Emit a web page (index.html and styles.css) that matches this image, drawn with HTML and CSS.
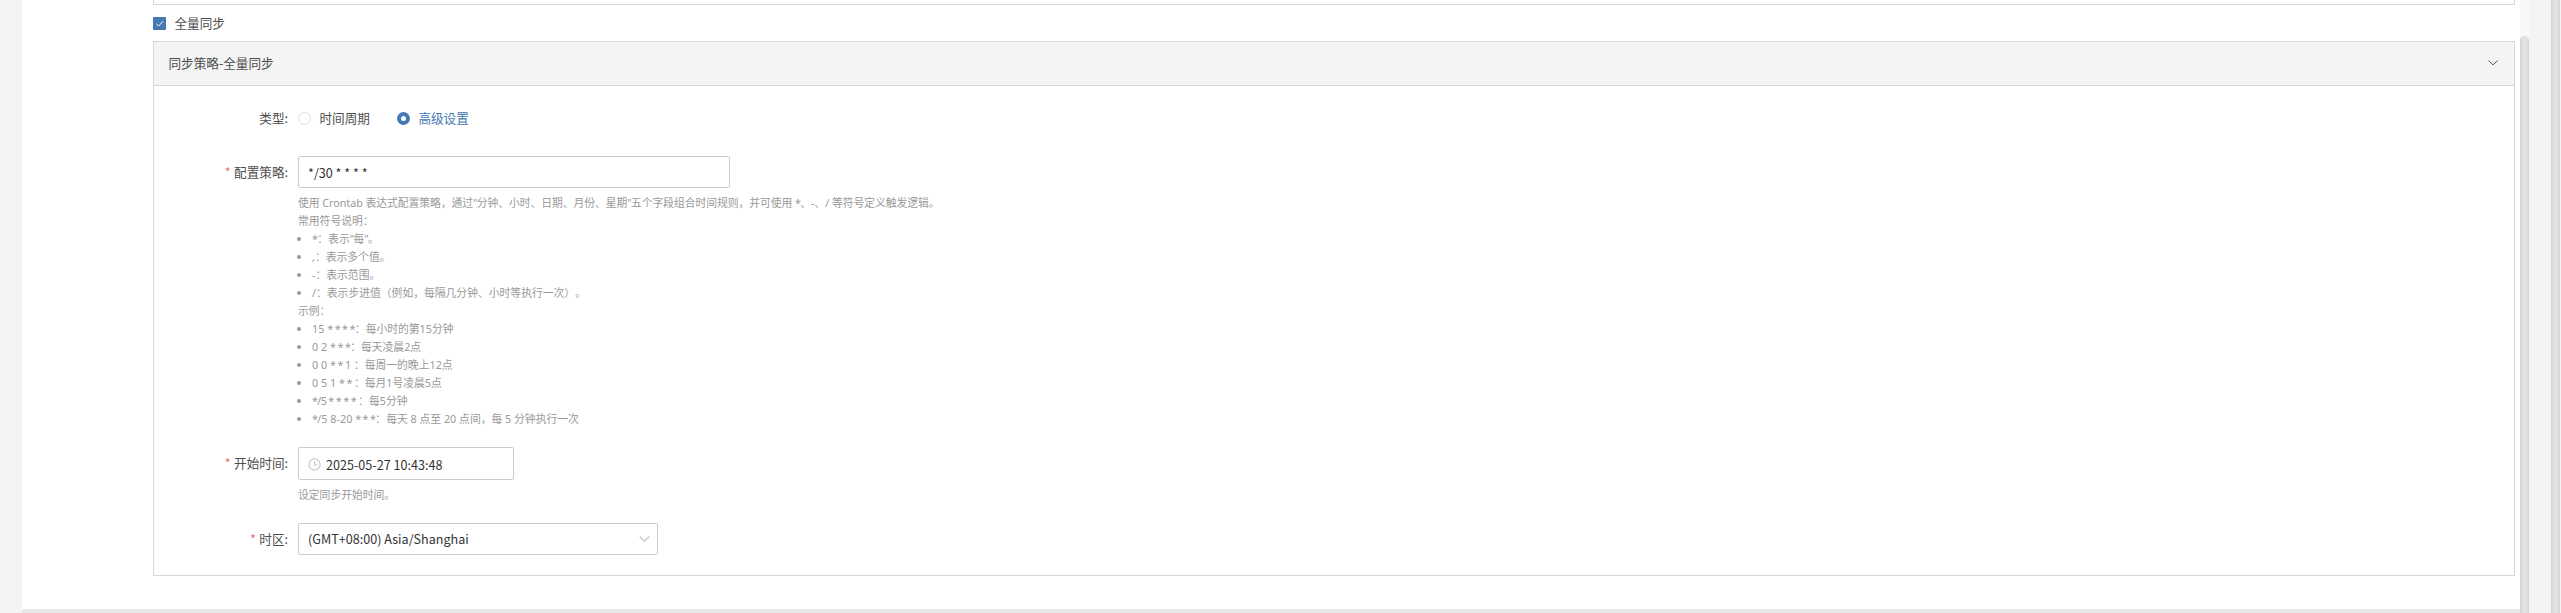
FILE: index.html
```html
<!DOCTYPE html>
<html lang="zh-CN">
<head>
<meta charset="utf-8">
<title>同步策略</title>
<link rel="stylesheet" href="styles.css">
</head>
<body>
<div class="page">
  <main class="content">
    <div class="previous"></div>
    <label class="check">
      <span class="check-box"><svg width="13" height="13" viewBox="0 0 13 13"><path d="M3.3 6.8 5.6 9 10 4.3" fill="none" stroke="#fff" stroke-width="1"/></svg></span>
      <span>全量同步</span>
    </label>
    <section class="card">
      <header class="card-head">
        <span>同步策略-全量同步</span>
        <svg width="10" height="6" viewBox="0 0 10 6"><path d="M.5.6 5 4.9 9.5.6" fill="none" stroke="#555" stroke-width="1"/></svg>
      </header>
      <div class="form">
        <div class="row row-type">
          <div class="label">类型<i>:</i></div>
          <div class="radios">
            <span class="radio"></span><span class="radio-text">时间周期</span>
            <span class="radio on"></span><span class="radio-text on-text">高级设置</span>
          </div>
        </div>
        <div class="row row-cron">
          <div class="label"><b>*</b>配置策略<i>:</i></div>
          <div class="field">
            <div class="input cron">*/30 * * * *</div>
            <div class="help">
              <p class="intro">使用 Crontab 表达式配置策略，通过<em>"</em>分钟、小时、日期、月份、星期<em>"</em>五个字段组合时间规则，并可使用 <em>*</em>、-、/ 等符号定义触发逻辑。</p>
              <p>常用符号说明：</p>
              <ul>
                <li><em>*</em>：表示<em>"</em>每<em>"</em>。</li>
                <li>,：表示多个值。</li>
                <li>-：表示范围。</li>
                <li>/：表示步进值（例如，每隔几分钟、小时等执行一次）。</li>
              </ul>
              <p>示例：</p>
              <ul>
                <li>15 <em>* * * *</em>：每小时的第15分钟</li>
                <li>0 2 <em>* * *</em>：每天凌晨2点</li>
                <li>0 0 <em>* * </em>1 ：每周一的晚上12点</li>
                <li>0 5 1 <em>* * </em>：每月1号凌晨5点</li>
                <li><em>*/5 * * * * </em>：每5分钟</li>
                <li><em>*</em>/5 8-20 <em>* * *</em>：每天 8 点至 20 点间，每 5 分钟执行一次</li>
              </ul>
            </div>
          </div>
        </div>
        <div class="row row-start">
          <div class="label"><b>*</b>开始时间<i>:</i></div>
          <div class="field">
            <div class="input date">
              <svg width="13" height="13" viewBox="0 0 13 13"><g fill="none" stroke="#c3c7d0" stroke-width="1.1"><circle cx="6.5" cy="6.5" r="5.6"/><path d="M6.5 3v4h3.2"/></g></svg>
              <span>2025-05-27 10:43:48</span>
            </div>
            <div class="help">设定同步开始时间。</div>
          </div>
        </div>
        <div class="row row-zone">
          <div class="label"><b>*</b>时区<i>:</i></div>
          <div class="input zone">
            <span>(GMT+08:00) Asia/Shanghai</span>
            <svg width="11" height="6" viewBox="0 0 11 6"><path d="M.7.5 5.5 5.2 10.3.5" fill="none" stroke="#c0c4cc" stroke-width="1.1"/></svg>
          </div>
        </div>
      </div>
    </section>
    <div class="bottom-track"></div>
  </main>
  <div class="inner-scroll"><div class="thumb"></div></div>
  <div class="gutter"></div>
  <div class="thumb outer"></div>
</div>
</body>
</html>
```
FILE: styles.css
```css
* { box-sizing: border-box; }
body, p, ul { margin: 0; padding: 0; }
body {
  font-family: "Noto Sans CJK SC", sans-serif;
  font-size: 12.6px;
  color: #4d4d4d;
  background: #f4f4f4;
  overflow: hidden;
}
svg { display: block; flex: none; }
.page { display: flex; height: 613px; padding-left: 22px; }
.content {
  width: 2498px;
  height: 613px;
  background: #fff;
  padding-left: 131px;
  display: flex;
  flex-direction: column;
}
.previous { width: 2362px; height: 5px; border: 1px solid #d8d8d8; border-top: 0; flex: none; }
.check { display: flex; align-items: center; gap: 8.5px; height: 18px; margin-top: 9px; line-height: 17px; padding-bottom: 1px; flex: none; }
.check-box { width: 13px; height: 13px; border-radius: 1px; background: #4479b3; margin-top: 2px; }
.card { width: 2362px; height: 535px; margin-top: 9px; border: 1px solid #d8d8d8; flex: none; }
.card-head {
  display: flex;
  align-items: center;
  justify-content: space-between;
  height: 44px;
  padding: 0 16px 3px 14.5px;
  background: #f4f4f4;
  border-bottom: 1px solid #d8d8d8;
}
.card-head svg { margin-top: 2px; }
.form { display: flex; flex-direction: column; padding-top: 16px; }
.row { display: flex; align-items: flex-start; }
.label {
  width: 144px;
  padding-right: 10px;
  text-align: right;
  line-height: 32px;
  flex: none;
}
.label b { font-weight: 400; color: #f56c6c; margin-right: 3.5px; font-size: 12.6px; }
.label i { font-style: normal; }
.row-type { height: 54px; }
.radios { display: flex; align-items: center; height: 32px; padding-top: 1px; }
.radio { width: 13px; height: 13px; border: 1px solid #dcdfe6; border-radius: 50%; background: #fff; }
.radio.on { margin-left: 27px; border: 4.5px solid #4479b3; }
.radio-text { margin-left: 8.5px; line-height: 18px; margin-top: -1px; }
.on-text { color: #4479b3; }
.row-cron { height: 291px; }
.input {
  display: flex;
  align-items: center;
  height: 32px;
  padding: 0 9px;
  border: 1px solid #ccc;
  border-radius: 2px;
  color: #333;
  background: #fff;
}
.cron { width: 432px; }
.help {
  margin-top: 6px;
  font-family: "Noto Sans", "Noto Sans CJK SC", sans-serif;
  font-size: 10.8px;
  line-height: 18px;
  color: #999;
  white-space: nowrap;
  text-spacing-trim: space-all;
}
.help p, .help li { height: 18px; }
.help em { font-style: normal; letter-spacing: -.65px; }
.intro { letter-spacing: -.05px; }
.help ul { list-style: none; }
.help li { white-space: pre; }
.help li::before {
  content: "";
  display: inline-block;
  width: 4px;
  height: 4px;
  margin: 0 11px 0 -1px;
  border-radius: 50%;
  background: #999;
  vertical-align: 2px;
}
.row-start { height: 76px; }
.date { width: 216px; height: 33px; gap: 5px; padding-top: 1px; }
.zone { width: 360px; justify-content: space-between; padding-right: 7px; padding-bottom: 1px; }
.row-zone .label { line-height: 31px; }
.bottom-track { height: 4px; margin: auto 0 0 -131px; background: #e8e8e8; }
.inner-scroll { width: 9px; padding-top: 36px; background: #f8f8f8; }
.thumb {
  height: 577px;
  border-radius: 5px 5px 0 0;
  background: linear-gradient(90deg, #d2d2d2, #e1e1e1 30%, #e4e4e4 70%, #d4d4d4);
}
.gutter { width: 22px; background: #f4f4f4; }
.outer { width: 9px; height: 613px; border-radius: 0; }
```
